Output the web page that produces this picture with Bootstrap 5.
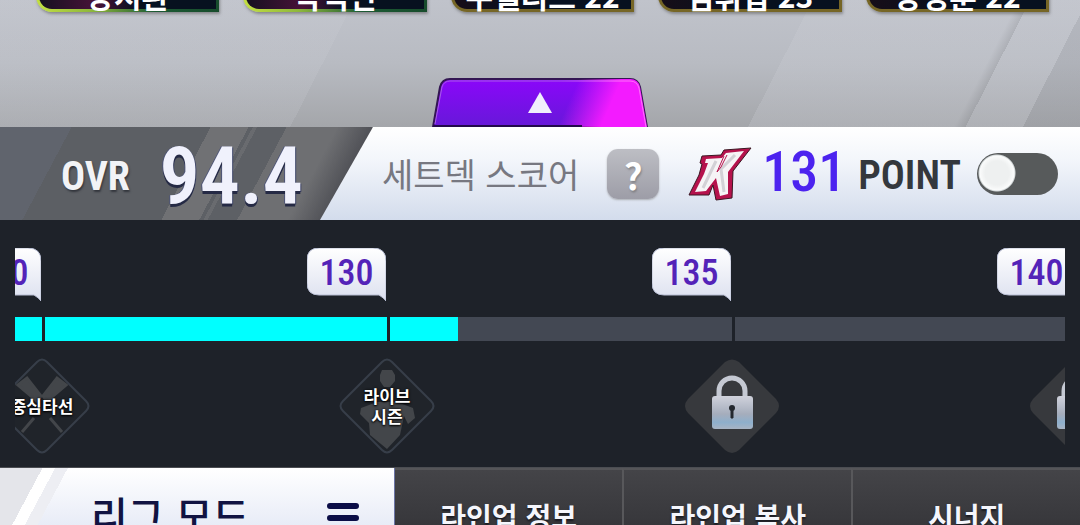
<!DOCTYPE html>
<html lang="ko">
<head>
<meta charset="utf-8">
<meta name="viewport" content="width=device-width, initial-scale=1">
<title>세트덱 스코어</title>
<link href="https://cdn.jsdelivr.net/npm/bootstrap@5.3.0/dist/css/bootstrap.min.css" rel="stylesheet">
<style>
body{font-family:"Noto Sans CJK KR","Noto Sans",sans-serif;background:#1e2229;height:100vh;overflow:hidden}
.narrow{font-family:"Roboto Condensed","Liberation Sans Narrow","Liberation Sans",sans-serif;font-weight:700;line-height:1}
.stage{height:127px;gap:66px;background:
 linear-gradient(117deg,#ced0d730 0 31%,transparent 31% 71%,#ced0d740 71% 89%,#94969b55 90%,#ced0d740 90% 95%,#8b8d9433 95%),
 linear-gradient(#c0c3cb,#b8bbc2 50%,#a4a6aa)}
.players{gap:24px;padding:0 31px 0 36px}
.player{height:60px;line-height:28px;font-size:30px;font-weight:700;color:#fff;background:linear-gradient(90deg,#160d18,#07111f 50%);border:3px solid #766626;border-radius:0 0 0 16px;box-shadow:1px 2px 3px #5558}
.player.live{background:linear-gradient(90deg,#151020,#481238 32%,#07111f 55%) padding-box,linear-gradient(90deg,#c3df42,#8fb83c 30%,#1c5a34 65%,#174c2c) border-box;border:3px solid transparent}
.raise{width:216px;height:49px;line-height:0}
.score{height:93px;background:linear-gradient(118deg,#60646d 0 17%,#5c5f64 17% 50%,#707174 50% 59%,#5d6065 59% 60%,#696b6f 60% 61%,#5d6065 61% 68%,#6e6f72 68% 80%,#4b4c52 90%);background-size:372px 100%}
.ovr{flex:0 0 320px;padding:6px 17px 0 61px}
.ovr-label{font-size:40px;color:#f2f3f6;text-shadow:1px 2px 2px #33363d}
.ovr-value{font-size:80px;font-weight:600;color:#f0f1fc;text-shadow:0 3px 0 #252a45,1px 1px 0 #3a4165,-1px 0 0 #4e5578}
.deck{clip-path:polygon(53px 0,100% 0,100% 100%,0 100%);background:linear-gradient(#fff,#f3f6fb 35%,#d3dcec);padding-left:62px;padding-right:22px}
.deck-title{font-size:34px;color:#777881;line-height:48px;margin-right:28px}
.help{width:52px;height:50px;border:0;border-radius:11px;background:linear-gradient(#bdbec4,#9d9da7);box-shadow:0 1px 2px #8889;color:#fff;font-size:36px;line-height:44px;text-shadow:1px 2px 2px #6668}
.club{margin-right:10px}
.points{font-size:56px;font-weight:500;color:#4c23ef;margin-right:12px;padding-bottom:4px}
.unit{font-size:40px;font-weight:600;color:#34383d;padding-top:4px}
.deck .form-check-input{width:81px;height:42px;margin:0;border:0;border-radius:21px;background-color:#575a5b;background-image:radial-gradient(circle at 20px 20px,#eef0f0 0 12px,#fafbfb 17px,#d5dadb 18px,transparent 19px);background-position:0 0;background-size:auto;background-repeat:no-repeat}
.deck .form-check-input:checked{background-color:#4c23ef;background-image:radial-gradient(circle at 61px 20px,#fff 0 18px,transparent 19px)}
.road{padding:28px 15px 13px}
.steps{margin-left:-317px}
.step{flex:0 0 345px}
.flag{width:79px;height:53px;margin-right:2px;padding-bottom:4px;font-size:36px;font-weight:500;color:#5423b8;position:relative}
.flag svg{position:absolute;inset:0}
.flag span{position:relative}
.bar{height:24px;margin:16px 1px 17px 0;width:342px;border-radius:0;background:#434853}
.bar .progress-bar{background:#0ff}
.gem{width:96px;height:96px;margin-right:-47px;position:relative;z-index:1}
.gem-name{position:absolute;inset:0;font-size:17px;font-weight:700;line-height:20px;color:#fff;text-shadow:0 0 3px #000,0 1px 2px #000}
.menu{min-height:58px;border-top:1px solid #4b4d52}
.menu a{color:#f5f6fc;text-decoration:none}
.mode{flex:0 0 395px;padding:22px 35px 0 91px;border-right:1px solid #6b74a5;background:linear-gradient(118deg,#e4e5ea 0 10%,#fff 10% 13%,#edeef3 13% 16%,transparent 16%),linear-gradient(#fff,#e8ecf7)}
.mode span{font-size:40px;line-height:48px;font-weight:500;color:#111342}
.mode svg{margin-top:3px}
.tab{padding-top:26px;font-size:28px;line-height:40px;font-weight:700;background:linear-gradient(#444448,#37373b);border-top:2px solid #555558;text-shadow:0 2px 2px #1a1b22}
.tab+.tab{border-left:2px solid #58585b}
</style>
</head>
<body class="d-flex flex-column">
<svg width="0" height="0" class="position-absolute"><defs>
 <linearGradient id="bubbleFill" x2="0" y2="1"><stop stop-color="#fff"/><stop offset="1" stop-color="#dce0ef"/></linearGradient>
 <linearGradient id="lockFill" x2="0" y2="1"><stop stop-color="#d0d2dc"/><stop offset=".55" stop-color="#a5adbc"/><stop offset=".8" stop-color="#8eafcc"/><stop offset="1" stop-color="#a8b4c4"/></linearGradient>
 <symbol id="bubble" viewBox="0 0 79 53"><path d="M12 0H66Q79 0 79 13V53Q77 50 72 47H12Q0 47 0 35V12Q0 0 12 0Z" fill="url(#bubbleFill)" stroke="#b9bfd4"/></symbol>
 <symbol id="gem" viewBox="0 0 96 96"><path d="M43 4Q48-1 53 4L92 43Q97 48 92 53L53 92Q48 97 43 92L4 53Q-1 48 4 43Z" fill="#20242a" stroke="#373e49" stroke-width="2"/></symbol>
 <symbol id="lock" viewBox="0 0 96 96"><path d="M41 4Q48-1 55 4L92 41Q98 48 92 55L55 92Q48 98 41 92L4 55Q-2 48 4 41Z" fill="#37393d"/><path d="M35 40V33A13 13 0 0 1 61 33V40" fill="none" stroke="#c5c9d3" stroke-width="5"/><rect x="28" y="38" width="41" height="33" rx="3" fill="url(#lockFill)"/><circle cx="48" cy="50" r="3" fill="#24282f"/><path d="M47 51H49V60H47Z" fill="#24282f" stroke="#24282f"/></symbol>
</defs></svg>

<header class="stage d-flex flex-column justify-content-end align-items-center overflow-hidden flex-shrink-0">
 <div class="players d-flex w-100">
  <div class="player live d-flex align-items-end justify-content-center flex-fill w-100">장시환</div>
  <div class="player live d-flex align-items-end justify-content-center flex-fill w-100">박석민</div>
  <div class="player d-flex align-items-end justify-content-center flex-fill w-100 text-nowrap">쿠엘리드 22</div>
  <div class="player d-flex align-items-end justify-content-center flex-fill w-100 text-nowrap">김휘집 23</div>
  <div class="player d-flex align-items-end justify-content-center flex-fill w-100 text-nowrap">장성훈 22</div>
 </div>
 <button class="raise btn p-0 border-0 flex-shrink-0" type="button" aria-label="펼치기">
  <svg width="216" height="49" viewBox="0 0 216 49"><defs><linearGradient id="violet" x2="0" y2="1"><stop stop-color="#8b06fa"/><stop offset="1" stop-color="#6619d8"/></linearGradient><linearGradient id="magenta" gradientUnits="userSpaceOnUse" x1="142" y1="12" x2="178" y2="28"><stop stop-color="#f31bff" stop-opacity="0"/><stop offset="1" stop-color="#f31bff"/></linearGradient><linearGradient id="rim"><stop offset=".6" stop-color="#a95ae8"/><stop offset=".85" stop-color="#ff70fa"/></linearGradient></defs>
  <path d="M1 49L8 9Q10 1 18 1H198Q206 1 208 9L215 49Z" fill="url(#violet)" stroke="#331653" stroke-width="2"/><path d="M1 49L8 9Q10 1 18 1H198Q206 1 208 9L215 49Z" fill="url(#magenta)"/><path d="M3 46L10 9Q12 3 18 3H198Q205 3 207 10L214 49" fill="none" stroke="url(#rim)"/><path d="M1 48H150" stroke="#230a4c" stroke-width="2"/><path d="M108 14L120 35H96Z" fill="#f0eefc"/></svg>
 </button>
</header>

<section class="score d-flex flex-shrink-0">
 <div class="ovr d-flex align-items-center text-nowrap">
  <span class="ovr-label narrow">OVR</span><span class="ovr-value narrow ms-auto">94.4</span>
 </div>
 <div class="deck flex-fill d-flex align-items-center text-nowrap">
  <span class="deck-title">세트덱 스코어</span>
  <button class="help p-0 me-auto fw-bold" type="button" aria-label="도움말">?</button>
  <svg class="club" width="64" height="54" viewBox="0 0 64 54" aria-hidden="true"><path d="M14 9L33 8L36 3L63 1L45 24L44 51L28 53L25 38L21 48L1 48L11 28L14 17L12 16Z" fill="#b5124c" stroke="#3a1722"/><path d="M18 12L34 11L38 6L56 4L40 25L40 47L32 49L28 31L18 44L7 45L16 27L20 16L17 16Z" fill="#f6f4f6"/><path d="M28 14L15 41M47 8L33 22L36 45" fill="none" stroke="#d3d1d6" stroke-width="3"/><path d="M36 9L29 25L33 20L39 8" fill="none" stroke="#b5124c"/></svg>
  <span class="points narrow">131</span>
  <label class="unit narrow me-3" for="pt">POINT</label>
  <span class="form-switch p-0 lh-1"><input class="form-check-input float-none d-block" type="checkbox" role="switch" id="pt"></span>
 </div>
</section>

<main class="road flex-shrink-0">
 <div class="overflow-hidden">
 <div class="steps d-flex">
  <div class="step d-flex flex-column align-items-end">
   <div class="flag narrow d-flex align-items-center justify-content-center"><svg width="79" height="53"><use href="#bubble"/></svg><span>120</span></div>
   <div class="bar progress"><div class="progress-bar" style="width:100%"></div></div>
   <div class="gem"><svg class="d-block" width="96" height="96"><use href="#gem"/><path d="M24 27L33 20L47 38L43 43ZM72 27L63 20L49 38L53 43ZM40 60L28 74M56 60L68 74" fill="#43464a" stroke="#43464a" stroke-width="3"/></svg><span class="gem-name d-flex align-items-center justify-content-center text-nowrap">중심타선</span></div>
  </div>
  <div class="step d-flex flex-column align-items-end">
   <div class="flag narrow d-flex align-items-center justify-content-center"><svg width="79" height="53"><use href="#bubble"/></svg><span>130</span></div>
   <div class="bar progress"><div class="progress-bar" style="width:100%"></div></div>
   <div class="gem"><svg class="d-block" width="96" height="96"><use href="#gem"/><path d="M43 12H53L56 17V23L51 29H45L41 23V17ZM22 50L38 44H58L74 50L76 60L69 66L65 58L61 77L48 91L31 77L30 65L21 56Z" fill="#43464a"/></svg><span class="gem-name d-flex align-items-center justify-content-center text-center">라이브<br>시즌</span></div>
  </div>
  <div class="step d-flex flex-column align-items-end">
   <div class="flag narrow d-flex align-items-center justify-content-center"><svg width="79" height="53"><use href="#bubble"/></svg><span>135</span></div>
   <div class="bar progress"><div class="progress-bar" style="width:20%"></div></div>
   <svg class="gem"><use href="#lock"/></svg>
  </div>
  <div class="step d-flex flex-column align-items-end">
   <div class="flag narrow d-flex align-items-center justify-content-center"><svg width="79" height="53"><use href="#bubble"/></svg><span>140</span></div>
   <div class="bar progress"><div class="progress-bar" style="width:0%"></div></div>
   <svg class="gem"><use href="#lock"/></svg>
  </div>
 </div>
 </div>
</main>

<nav class="menu d-flex flex-fill overflow-hidden">
 <a class="mode d-flex justify-content-between" href="#"><span>리그 모드</span><svg width="32" height="34" viewBox="0 0 32 34"><path d="M3 13H29M3 25H29" stroke="#0b0d46" stroke-width="6" stroke-linecap="round"/></svg></a>
 <a class="tab flex-fill w-100 text-center" href="#">라인업 정보</a>
 <a class="tab flex-fill w-100 text-center" href="#">라인업 복사</a>
 <a class="tab flex-fill w-100 text-center" href="#">시너지</a>
</nav>
<script src="https://cdn.jsdelivr.net/npm/bootstrap@5.3.0/dist/js/bootstrap.bundle.min.js"></script>
</body>
</html>
